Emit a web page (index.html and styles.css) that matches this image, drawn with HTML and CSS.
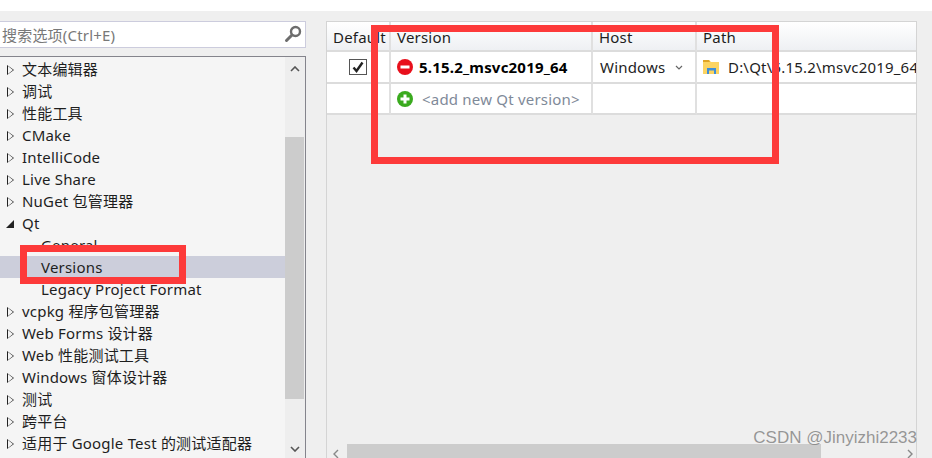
FILE: index.html
```html
<!DOCTYPE html>
<html lang="zh">
<head>
<meta charset="utf-8">
<title>Options</title>
<link rel="stylesheet" href="styles.css">
</head>
<body>
<div class="page">
  <aside class="left">
    <div class="search">
      <span class="search-text">搜索选项(Ctrl+E)</span>
      <svg class="search-icon" width="18" height="18" viewBox="0 0 18 18"><circle cx="11.5" cy="6.5" r="4.5" fill="none" stroke="#6d6d6d" stroke-width="2.4"/><path d="M8 10 L2.5 15.5" stroke="#6d6d6d" stroke-width="3" stroke-linecap="round"/></svg>
    </div>
    <div class="tree">
      <ul class="rows">
        <li class="row"><i class="tri"></i>文本编辑器</li>
        <li class="row"><i class="tri"></i>调试</li>
        <li class="row"><i class="tri"></i>性能工具</li>
        <li class="row"><i class="tri"></i>CMake</li>
        <li class="row"><i class="tri"></i>IntelliCode</li>
        <li class="row"><i class="tri"></i>Live Share</li>
        <li class="row"><i class="tri"></i>NuGet 包管理器</li>
        <li class="row"><i class="tri open"></i>Qt</li>
        <li class="row child">General</li>
        <li class="row child selected">Versions</li>
        <li class="row child">Legacy Project Format</li>
        <li class="row"><i class="tri"></i>vcpkg 程序包管理器</li>
        <li class="row"><i class="tri"></i>Web Forms 设计器</li>
        <li class="row"><i class="tri"></i>Web 性能测试工具</li>
        <li class="row"><i class="tri"></i>Windows 窗体设计器</li>
        <li class="row"><i class="tri"></i>测试</li>
        <li class="row"><i class="tri"></i>跨平台</li>
        <li class="row"><i class="tri"></i>适用于 Google Test 的测试适配器</li>
      </ul>
      <div class="vscroll">
        <svg class="arrow-up" width="10" height="6" viewBox="0 0 10 6"><path d="M1 5 L5 1 L9 5" fill="none" stroke="#555" stroke-width="1.6"/></svg>
        <div class="vthumb"></div>
        <svg class="arrow-down" width="10" height="6" viewBox="0 0 10 6"><path d="M1 1 L5 5 L9 1" fill="none" stroke="#555" stroke-width="1.6"/></svg>
      </div>
    </div>
  </aside>
  <main class="right">
    <div class="grid">
      <div class="cell head c1">Default</div>
      <div class="cell head c2">Version</div>
      <div class="cell head c3">Host</div>
      <div class="cell head c4">Path</div>

      <div class="cell c1 center"><span class="check"><svg width="14" height="14" viewBox="0 0 14 14"><path d="M2.5 7.5 L5.5 11 L11.5 2.5" fill="none" stroke="#222" stroke-width="2.4"/></svg></span></div>
      <div class="cell c2 bold"><svg class="status" width="16" height="16" viewBox="0 0 16 16"><circle cx="8" cy="8" r="8" fill="#e8101c"/><rect x="3.5" y="6.5" width="9" height="3" fill="#fff"/></svg>5.15.2_msvc2019_64</div>
      <div class="cell c3 host">Windows<svg class="chev" width="8" height="5" viewBox="0 0 8 5"><path d="M1 1 L4 4 L7 1" fill="none" stroke="#666" stroke-width="1.2"/></svg></div>
      <div class="cell c4"><svg class="folder" width="17" height="16" viewBox="0 0 17 16"><path d="M0 1 H6 L8 3 H16 V15 H0 Z" fill="#fcd462"/><path d="M0 1 H6 L7 3 H0 Z" fill="#e0a526"/><path d="M4 15 V9 H13 V15 H11 V11.5 H6 V15 Z" fill="#3f8fd8"/></svg><span class="path">D:\Qt\5.15.2\msvc2019_64</span></div>

      <div class="cell c1"></div>
      <div class="cell c2 add"><svg class="status" width="16" height="16" viewBox="0 0 16 16"><circle cx="8" cy="8" r="8" fill="#3aaa1e"/><path d="M8 3.5 V12.5 M3.5 8 H12.5" stroke="#fff" stroke-width="3"/></svg><span class="add-text">&lt;add new Qt version&gt;</span></div>
      <div class="cell c3"></div>
      <div class="cell c4"></div>
    </div>
    <div class="hscroll">
      <svg width="6" height="10" viewBox="0 0 6 10"><path d="M5 1 L1 5 L5 9" fill="none" stroke="#888" stroke-width="1.4"/></svg>
      <div class="hthumb"></div>
      <svg width="6" height="10" viewBox="0 0 6 10"><path d="M1 1 L5 5 L1 9" fill="none" stroke="#888" stroke-width="1.4"/></svg>
    </div>
  </main>
  <div class="mark mark-left"></div>
  <div class="mark mark-right"></div>
  <div class="watermark">CSDN @Jinyizhi2233</div>
</div>
</body>
</html>
```

FILE: styles.css
```css
* { box-sizing: border-box; }
html, body { margin: 0; padding: 0; }
body { font-family: "Noto Sans", "Noto Sans CJK SC", sans-serif; font-size: 15px; letter-spacing: .2px; color: #1e1e1e; }
.page {
  position: relative;
  width: 932px;
  height: 458px;
  overflow: hidden;
  background: #efefef;
  border-top: 11px solid #fff;
  display: flex;
  gap: 20px;
}
.left { width: 306px; flex: none; padding-top: 10px; display: flex; flex-direction: column; gap: 8px; }
.search {
  height: 27px;
  background: #fff;
  border: 1px solid #ccccdd;
  border-left: 0;
  display: flex;
  align-items: center;
  justify-content: space-between;
  padding: 0 3px 0 2px;
  color: #787878;
  line-height: 1;
}
.search-text { padding-top: 2px; }
.search-icon { flex: none; }
.tree {
  height: 403px;
  background: #f5f5f5;
  border: 1px solid #84848c;
  border-left: 0;
  border-bottom: 0;
  display: flex;
}
.rows { list-style: none; margin: 0; padding: 1px 0 0; flex: 1; min-width: 0; }
.row { height: 22px; display: flex; align-items: center; padding: 2px 0 0 7px; white-space: pre; line-height: 1; }
.child { padding-left: 41px; }
.selected { background: #cccedb; }
.tri {
  width: 0; height: 0; flex: none; margin-right: 8px; position: relative;
  border-left: 7px solid #222;
  border-top: 5.5px solid transparent;
  border-bottom: 5.5px solid transparent;
}
.tri::after {
  content: ""; position: absolute; left: -6px; top: -4px;
  border-left: 5px solid #f5f5f5;
  border-top: 4px solid transparent;
  border-bottom: 4px solid transparent;
}
.tri.open {
  border-left: 8px solid transparent;
  border-top: 0;
  border-bottom: 8px solid #222;
  margin-left: -1px;
  margin-right: 8px;
}
.tri.open::after { display: none; }
.vscroll {
  width: 20px;
  flex: none;
  background: #eeeeee;
  display: flex;
  flex-direction: column;
  align-items: center;
  border-right: 1px solid #eee;
}
.arrow-up { margin-top: 9px; }
.vthumb { width: 19px; height: 262px; margin-top: 65px; background: #cccccc; }
.arrow-down { margin-top: 47px; }
.right { width: 591px; flex: none; margin-top: 10px; border: 1px solid #d4d4d4; border-bottom: 0; display: flex; flex-direction: column; justify-content: space-between; }
.grid {
  display: grid;
  grid-template-columns: 64px 202px 104px 219px;
  grid-template-rows: 30px 32px 31px;
  background: #fff;
}
.cell {
  border-right: 2px solid #e0e0e0;
  border-bottom: 2px solid #dcdcdc;
  display: flex;
  align-items: center;
  padding-left: 6px;
  white-space: nowrap;
  overflow: hidden;
  line-height: 1;
  min-width: 0;
}
.c4 { border-right: 0; }
.head { background: linear-gradient(#fff, #eef0f3); padding-top: 3px; }
.head.c1 { overflow: visible; }
.center { justify-content: center; padding-left: 0; }
.check { width: 18px; height: 16px; border: 1px solid #555; background: #fff; display: flex; align-items: center; justify-content: center; }
.status { flex: none; margin-right: 6px; }
.bold { font-weight: 700; color: #000; }
.add-text { color: #7f8a99; margin-left: 3px; padding-top: 2px; }
.host { padding-left: 7px; }
.chev { margin-left: 10px; }
.folder { flex: none; margin-right: 8px; }
.hscroll { height: 14px; display: flex; align-items: center; justify-content: space-between; padding: 0 3px 0 6px; flex: none; }
.hscroll svg { margin-top: 6px; }
.hthumb { width: 474px; height: 14px; background: #cccccc; margin-left: 8px; margin-right: auto; }
.mark { position: absolute; border: 7px solid #fd3a3a; pointer-events: none; }
.mark-left { left: 20px; top: 234px; width: 166px; height: 39px; }
.mark-right { left: 371px; top: 14px; width: 408px; height: 139px; }
.watermark { position: absolute; right: 15px; top: 417px; font-family: "Liberation Sans", sans-serif; font-size: 17px; letter-spacing: 0; color: rgba(120,120,120,.75); }
```
